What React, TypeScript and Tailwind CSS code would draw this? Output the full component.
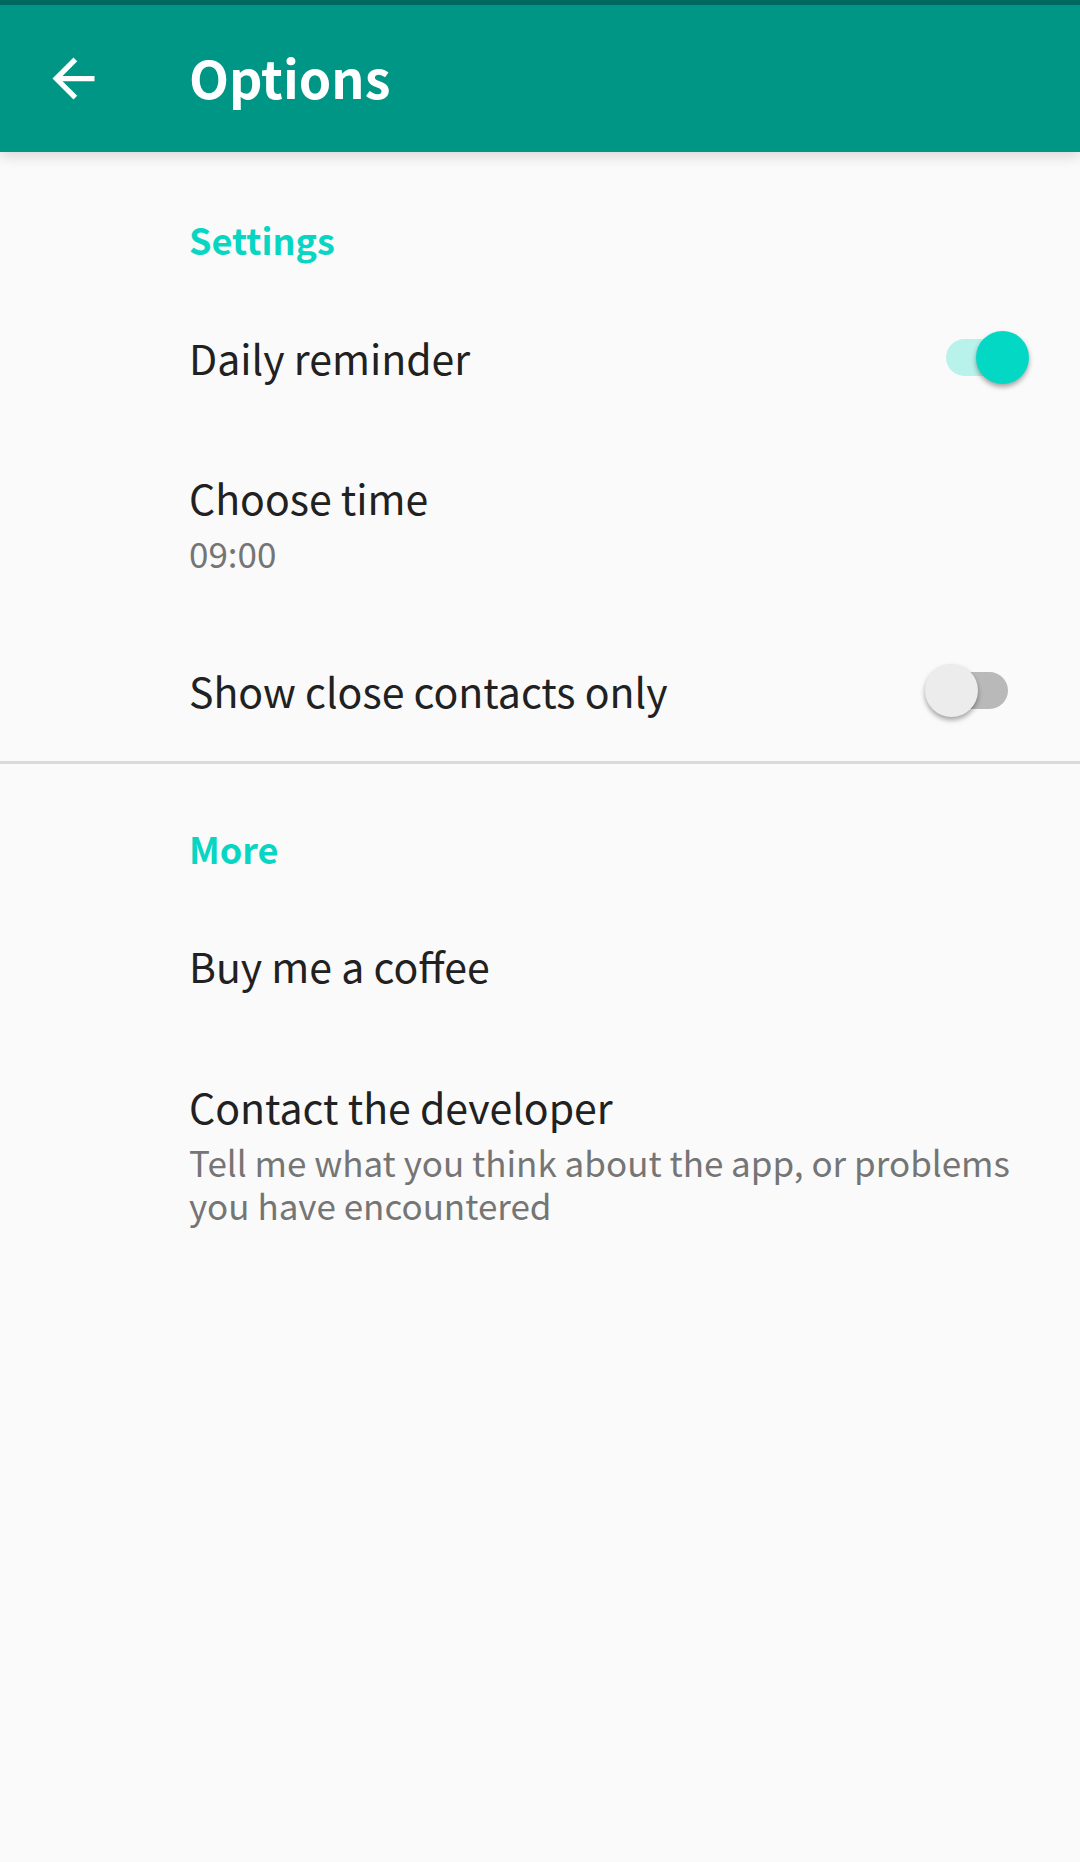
import { useState, type ReactNode } from "react";

function Section({ title, first, children }: { title: string; first?: boolean; children: ReactNode }) {
  return (
    <section className={first ? "border-t-[3px] border-transparent" : "border-t-[3px] border-[#dadada]"}>
      <h2 className="pt-[58px] pr-10 pb-[22px] pl-[189px] text-[36px] leading-[52px] font-bold text-[#08d6c3]">{title}</h2>
      {children}
    </section>
  );
}

function ToggleRow({ id, label, initial }: { id: string; label: string; initial: boolean }) {
  const [on, setOn] = useState(initial);
  return (
    <div className="flex min-h-[141px] items-center justify-between pr-[72px] pl-[189px]">
      <label htmlFor={id} className="pb-0.5 text-[41px] leading-[50px] text-[#212121]">
        {label}
      </label>
      <input
        id={id}
        type="checkbox"
        role="switch"
        checked={on}
        onChange={() => setOn(!on)}
        className="relative h-[37px] w-[62px] shrink-0 appearance-none rounded-full bg-[#b9b9b9] before:absolute before:-top-2 before:-left-[21px] before:size-[53px] before:rounded-full before:bg-[#ececec] before:shadow-[0_3px_5px_rgba(0,0,0,0.35)] checked:bg-[#b9f1eb] checked:before:left-[30px] checked:before:bg-[#03d8c4]"
      />
    </div>
  );
}

function ActionRow({ title, summary }: { title: string; summary?: string }) {
  return (
    <button type="button" className="flex min-h-[141px] w-full flex-col pt-11 pr-[42px] pb-[46px] pl-[189px] text-left">
      <span className="text-[41px] leading-[50px] text-[#212121]">{title}</span>
      {summary && <span className="pt-[9px] text-[35px] leading-[43px] text-[#757575]">{summary}</span>}
    </button>
  );
}

export default function App() {
  return (
    <div className="min-h-screen bg-[#fafafa] font-['Noto_Sans_CJK_SC',sans-serif]">
      <header className="flex h-[152px] items-center border-t-[5px] border-[#00695f] bg-[#009686] pl-[42px] text-white shadow-[0_3px_14px_rgba(0,0,0,0.16)]">
        <button type="button" aria-label="Back" className="mr-[84px] size-[63px]">
          <svg viewBox="0 0 24 24" className="size-full" fill="currentColor" aria-hidden="true">
            <path d="M20 11H7.83l5.59-5.59L12 4l-8 8 8 8 1.41-1.41L7.83 13H20v-2z" />
          </svg>
        </button>
        <h1 className="pb-1 text-[52px] leading-[64px] font-bold">Options</h1>
      </header>
      <main>
        <Section title="Settings" first>
          <ToggleRow id="daily" label="Daily reminder" initial={true} />
          <ActionRow title="Choose time" summary="09:00" />
          <ToggleRow id="close" label="Show close contacts only" initial={false} />
        </Section>
        <Section title="More">
          <ActionRow title="Buy me a coffee" />
          <ActionRow title="Contact the developer" summary="Tell me what you think about the app, or problems you have encountered" />
        </Section>
      </main>
    </div>
  );
}
